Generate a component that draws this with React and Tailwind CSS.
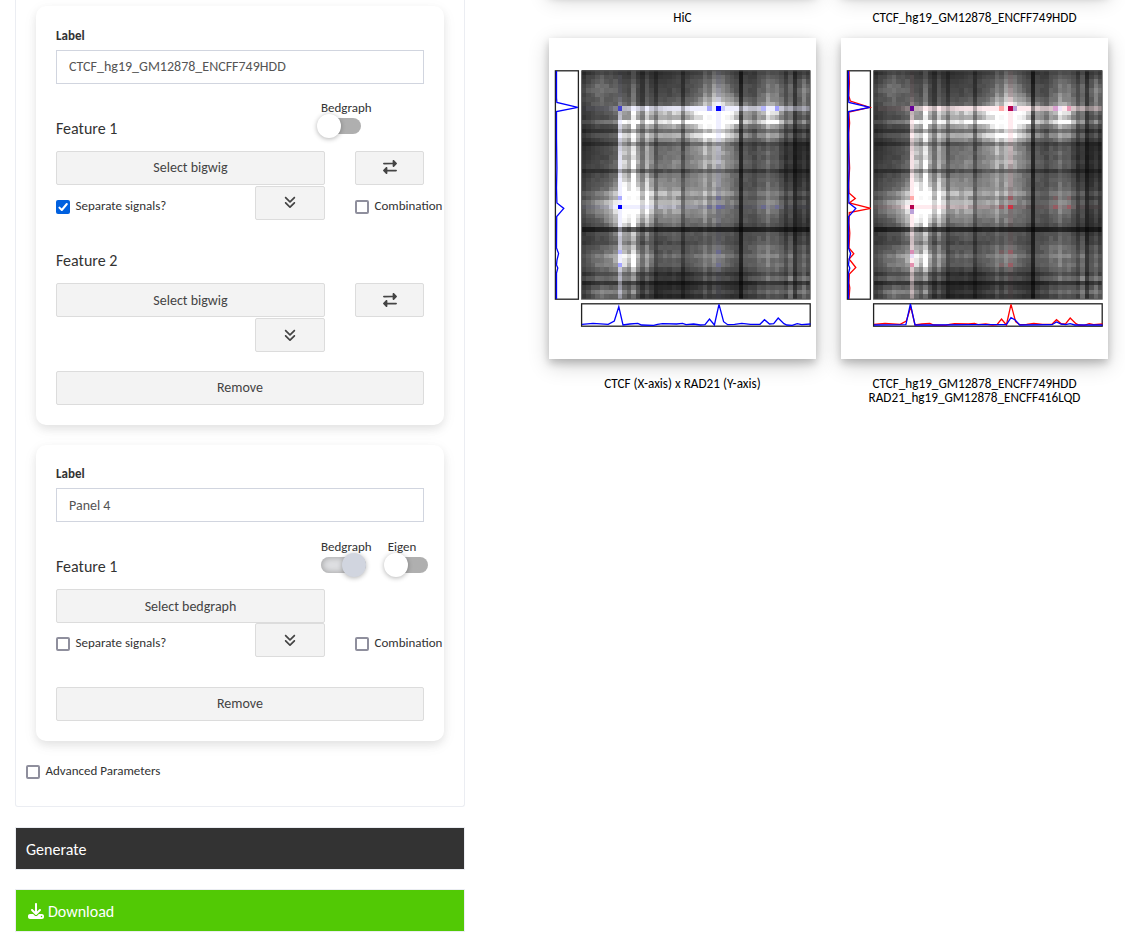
import React from "react";
import { FaAnglesDown, FaDownload, FaRightLeft } from "react-icons/fa6";

/* ---------- heat map data ---------- */

const SIZE = 51;
const NODES = [0, 4, 7, 8, 12, 17, 22, 27, 30, 33, 38, 42, 46, 50];
const BASE = [
  [55, 80, 70, 65, 60, 50, 60, 75, 100, 75, 65, 85, 70, 70],
  [80, 105, 85, 85, 70, 62, 65, 95, 135, 95, 70, 110, 90, 120],
  [70, 85, 85, 110, 85, 85, 90, 150, 220, 170, 90, 150, 90, 110],
  [65, 85, 110, 150, 215, 205, 200, 290, 370, 280, 160, 250, 130, 110],
  [60, 70, 85, 215, 200, 165, 165, 240, 310, 230, 110, 170, 95, 80],
  [50, 62, 85, 205, 165, 110, 110, 150, 170, 125, 75, 90, 50, 40],
  [60, 65, 90, 200, 165, 110, 110, 130, 145, 120, 75, 85, 45, 45],
  [75, 95, 150, 290, 240, 150, 130, 130, 130, 115, 80, 105, 70, 60],
  [100, 135, 220, 370, 310, 170, 145, 130, 115, 110, 90, 120, 75, 65],
  [75, 95, 170, 280, 230, 125, 120, 115, 110, 105, 85, 95, 65, 55],
  [65, 70, 90, 165, 110, 75, 75, 80, 90, 85, 90, 95, 80, 70],
  [85, 110, 150, 250, 170, 90, 85, 105, 120, 95, 95, 110, 95, 90],
  [70, 90, 90, 140, 95, 50, 45, 70, 75, 65, 80, 95, 110, 105],
  [70, 120, 110, 130, 80, 40, 45, 60, 65, 55, 70, 90, 105, 110],
];
const BIN = [
  0.85, 0.95, 1, 1.05, 1.05, 1, 1, 1.05, 1.05, 0.92, 0.85, 1.3, 0.9, 0.68, 1.12, 0.92,
  0.66, 0.95, 1, 0.97, 1.1, 1.05, 0.68, 0.95, 1, 1, 1, 1.2, 0.94, 1.13, 1.05, 1,
  0.95, 0.95, 0.85, 0.34, 0.88, 0.9, 0.92, 1.05, 1, 1.18, 0.97, 1.05, 0.92, 0.72, 1.08,
  0.52, 0.85, 1.1, 0.82,
];

function locate(i) {
  let k = 0;
  while (k < NODES.length - 2 && i >= NODES[k + 1]) k++;
  return [k, (i - NODES[k]) / (NODES[k + 1] - NODES[k])];
}

function noise(a, b) {
  const s = Math.sin(Math.min(a, b) * 12.9898 + Math.max(a, b) * 78.233) * 43758.5453;
  return s - Math.floor(s);
}

function level(r, c) {
  const [i, u] = locate(r);
  const [j, v] = locate(c);
  const top = BASE[i][j] * (1 - v) + BASE[i][j + 1] * v;
  const bottom = BASE[i + 1][j] * (1 - v) + BASE[i + 1][j + 1] * v;
  const smooth = top * (1 - u) + bottom * u;
  const g = 1.06 * smooth * BIN[r] * BIN[c] * (0.93 + 0.16 * noise(r, c));
  return Math.round(Math.max(4, Math.min(255, g)));
}

const GRID = Array.from({ length: SIZE }, (_, r) =>
  Array.from({ length: SIZE }, (_, c) => level(r, c))
);

/* [row, column, colour, opacity] */
const BLUE_CELLS = [
  [8, 8, "#4444cc", 1], [8, 28, "#a9a9ff", 1], [8, 30, "#0000ff", 1], [8, 31, "#ccccff", 1],
  [8, 40, "#b4b4fa", 1], [8, 43, "#a0a0ff", 1], [28, 8, "#aaaaff", 1], [30, 8, "#0000ff", 1],
  [40, 8, "#b5b5fa", 1], [43, 8, "#a5a5ff", 1], [30, 30, "#5555cc", 0.5], [30, 31, "#5555cc", 0.25],
  [30, 28, "#5555cc", 0.2], [30, 40, "#5555cc", 0.25], [30, 43, "#5555cc", 0.25],
  [28, 30, "#5555cc", 0.25], [40, 30, "#5555cc", 0.25], [43, 30, "#5555cc", 0.2],
];
const RED_CELLS = [
  [8, 8, "#660099", 1], [8, 28, "#ffaaaa", 1], [8, 30, "#b5004d", 1], [8, 31, "#bba0d8", 1],
  [8, 40, "#d9a0d0", 1], [8, 41, "#f0e4fa", 1], [8, 43, "#e89ab8", 1], [28, 8, "#ffaaaa", 1],
  [30, 8, "#b5004d", 1], [31, 8, "#bba0d8", 1], [40, 8, "#d98cb5", 1], [43, 8, "#e38fae", 1],
  [41, 8, "#e8dcf6", 1], [30, 30, "#cc3344", 1], [28, 30, "#cc3344", 0.35], [30, 28, "#cc3344", 0.35],
  [30, 40, "#cc3344", 0.35], [30, 43, "#cc3344", 0.35], [40, 30, "#cc3344", 0.3], [43, 30, "#cc3344", 0.35],
  [40, 28, "#cc3344", 0.15], [43, 28, "#cc3344", 0.15], [28, 40, "#cc3344", 0.15], [28, 43, "#cc3344", 0.15],
];

const OX = 33;
const OY = 32.3;
const CELL = 4.48;

function HeatMap({ cells, tint }) {
  const full = SIZE * CELL;
  return (
    <g shapeRendering="crispEdges">
      {GRID.map((row, r) =>
        row.map((g, c) => (
          <rect
            key={r * SIZE + c}
            x={OX + c * CELL}
            y={OY + r * CELL}
            width={CELL}
            height={CELL}
            fill={`rgb(${g},${g},${g})`}
          />
        ))
      )}
      <g fill={tint} className="mix-blend-multiply">
        <rect x={OX + 8 * CELL} y={OY} width={CELL} height={full} />
        <rect x={OX} y={OY + 8 * CELL} width={full} height={CELL} />
        <rect x={OX + 30 * CELL} y={OY} width={CELL} height={full} />
        <rect x={OX} y={OY + 30 * CELL} width={full} height={CELL} />
      </g>
      <g fill={tint} opacity="0.3">
        <rect x={OX + 8 * CELL} y={OY + 9 * CELL} width={CELL} height={full - 9 * CELL} />
        <rect x={OX + 9 * CELL} y={OY + 8 * CELL} width={full - 9 * CELL} height={CELL} />
      </g>
      {cells.map(([r, c, fill, opacity]) => (
        <rect
          key={`${r}-${c}`}
          x={OX + c * CELL}
          y={OY + r * CELL}
          width={CELL}
          height={CELL}
          fill={fill}
          opacity={opacity}
        />
      ))}
    </g>
  );
}

function Frame() {
  return (
    <g fill="none" stroke="#222" strokeWidth="1.3">
      <rect x="6.4" y="32.8" width="23" height="228.4" />
      <rect x="32.6" y="32.8" width="228.6" height="228.4" strokeWidth="1" stroke="#555" />
      <rect x="32.6" y="265.8" width="228.6" height="22.4" />
    </g>
  );
}

const pts = (xs) =>
  xs.map(([x, y]) => `${((x - 136) / 2.635 + 33).toFixed(1)},${(y / 3 - 38).toFixed(1)}`).join(" ");

/* Signals along the horizontal axis */
const H_SIGNAL = pts([
  [136, 973], [165, 970], [205, 973], [221, 963], [233, 920], [244, 975], [262, 972], [283, 970], [293, 975],
  [325, 976], [335, 973], [348, 971], [385, 972], [401, 970], [410, 974], [430, 972], [448, 975], [460, 974],
  [472, 957], [485, 975], [497, 913], [509, 965], [520, 974], [538, 973], [557, 970], [580, 973], [605, 973],
  [617, 959], [630, 972], [641, 971], [653, 954], [668, 971], [676, 975], [690, 976], [703, 971], [715, 974],
  [738, 972],
]);
const H_SECOND = pts([
  [136, 975], [220, 974], [232, 912], [244, 975], [300, 975], [400, 974], [485, 974], [497, 953], [508, 960],
  [520, 975], [605, 974], [617, 966], [629, 972], [641, 974], [653, 971], [665, 975], [738, 975],
]);

/* Signals along the vertical axis */
const V_SIGNAL =
  "7.5,33 7.5,60 7.9,64.5 28.8,69.3 7.5,73.6 7.5,100 7.9,130 7.5,150 7.9,165 14.8,170.4 7.7,178.5 7.5,210 9.6,215.5 8,222 7.5,227 8.8,230 7.5,235 7.5,261";
const V_RED =
  "8,33 8.4,45 7.8,58 9.3,63 28.8,69.3 7.8,74 8.6,85 7.8,95 8,115 8.6,130 7.8,145 8,155 14.3,160.5 8.3,165 29.8,170.4 8.3,174.5 8,185 8.8,195 8,210 12.8,215.8 8.1,221 14.8,229.5 8.4,236 8,245 8.8,250 8,261";

function Plot({ combined }) {
  return (
    <svg width="267" height="321" viewBox="0 0 267 321" className="isolate block">
      <HeatMap cells={combined ? RED_CELLS : BLUE_CELLS} tint={combined ? "#ffebef" : "#efefff"} />
      <Frame />
      <g fill="none" strokeWidth="1.3">
        {combined && <polyline points={V_RED} stroke="#f00" />}
        <polyline points={V_SIGNAL} stroke="#00f" />
        <polyline points={H_SIGNAL} stroke={combined ? "#f00" : "#00f"} />
        {combined && <polyline points={H_SECOND} stroke="#00f" />}
      </g>
    </svg>
  );
}

/* ---------- form controls ---------- */

function Button({ children, className = "" }) {
  return (
    <button
      className={`flex h-[34px] shrink-0 items-center justify-center rounded-[2px] border border-[#dcdcdc] bg-[#f3f3f3] text-[14px] text-[#444] ${className}`}
    >
      {children}
    </button>
  );
}

function Check({ label, checked }) {
  return (
    <label className="flex h-[14px] items-center gap-[5.5px] whitespace-nowrap text-[13px] text-[#333]">
      {checked ? (
        <span className="flex size-[14px] shrink-0 items-center justify-center rounded-[2px] bg-[#0060df]">
          <svg width="14" height="14" viewBox="0 0 14 14" fill="none" stroke="#fff" strokeWidth="2" strokeLinecap="round" strokeLinejoin="round">
            <path d="M3.4 7.6 L5.8 10 L10.8 4" />
          </svg>
        </span>
      ) : (
        <span className="size-[14px] shrink-0 rounded-[2px] border-2 border-[#8f8f9d] bg-white" />
      )}
      <span className="pb-0.5">{label}</span>
    </label>
  );
}

function Toggle({ label, on }) {
  return (
    <div className="flex shrink-0 flex-col">
      <span className="text-[13px] leading-[13px] text-[#333]">{label}</span>
      <div className="flex h-6 items-center">
        {on ? (
          <div className="flex h-4 w-[45px] items-center justify-end rounded-full bg-[#dfe0e3] shadow-[inset_0_0_7px_#999]">
            <span className="size-6 shrink-0 rounded-full bg-[#d1d5df] shadow-[0_1px_5px_rgba(0,0,0,0.3)]" />
          </div>
        ) : (
          <div className="-ml-[4px] flex h-4 w-[44px] items-center rounded-full bg-gradient-to-r from-transparent from-30% to-[#afafaf] to-30%">
            <span className="size-6 shrink-0 rounded-full bg-white shadow-[0_1px_5px_rgba(0,0,0,0.3)]" />
          </div>
        )}
      </div>
    </div>
  );
}

function Field({ value, className = "" }) {
  return (
    <>
      <div className="h-[24px] text-[13px] leading-[20px] font-bold text-[#333]">Label</div>
      <input
        readOnly
        value={value}
        className={`block h-[34px] w-full border border-[#d1d5df] bg-white px-3 text-[14px] text-[#555] outline-none ${className}`}
      />
    </>
  );
}

function Card({ children, className = "" }) {
  return (
    <section
      className={`w-[408px] rounded-[10px] bg-white px-5 shadow-[0_4px_8px_rgba(0,0,0,0.08),0_4px_16px_rgba(0,0,0,0.05)] ${className}`}
    >
      {children}
    </section>
  );
}

function PlotCard({ combined }) {
  return (
    <div className="h-[321px] w-[267px] bg-white shadow-[0_4px_8px_rgba(0,0,0,0.2),0_6px_20px_rgba(0,0,0,0.19)]">
      <Plot combined={combined} />
    </div>
  );
}

function Caption({ children }) {
  return (
    <div className="mt-[18px] text-center text-[13.2px] leading-[14px] whitespace-pre text-black">{children}</div>
  );
}

export default function App() {
  return (
    <div className="flex h-[947px] w-full overflow-hidden bg-white font-[Carlito,Calibri,Lato,sans-serif]">
      <aside className="ml-[15px] w-[450px] shrink-0">
        <div className="h-[807px] rounded-b-[3px] border border-t-0 border-[#ebedf2] pt-1.5 pl-5">
          <Card className="h-[419px] pt-5">
            <Field value="CTCF_hg19_GM12878_ENCFF749HDD" className="pb-0.5" />
            <div className="mt-[17px] flex h-[50px] items-start">
              <h3 className="mt-[18px] w-[265px] shrink-0 text-[16px] leading-[20px] text-[#333]">Feature 1</h3>
              <Toggle label="Bedgraph" />
            </div>
            <div className="flex justify-between">
              <Button className="w-[269px] pb-0.5">Select bigwig</Button>
              <Button className="w-[69px] pb-0.5"><FaRightLeft /></Button>
            </div>
            <div className="mt-px flex h-[65px] items-start">
              <div className="mt-[14px] w-[199px] shrink-0"><Check label="Separate signals?" checked /></div>
              <Button className="w-[70px] pb-0.5"><FaAnglesDown /></Button>
              <div className="mt-[14px] ml-[30px] w-0"><Check label="Combination" /></div>
            </div>
            <h3 className="h-[32px] text-[16px] leading-[20px] text-[#333]">Feature 2</h3>
            <div className="flex justify-between">
              <Button className="w-[269px]">Select bigwig</Button>
              <Button className="w-[69px]"><FaRightLeft /></Button>
            </div>
            <Button className="mt-px ml-[199px] w-[70px]"><FaAnglesDown /></Button>
            <Button className="mt-[19px] w-full pb-0.5">Remove</Button>
          </Card>

          <Card className="mt-5 h-[296px] pt-[19px]">
            <Field value="Panel 4" />
            <div className="mt-[18px] flex h-[49px] items-start">
              <h3 className="mt-[17px] w-[265px] shrink-0 text-[16px] leading-[20px] text-[#333]">Feature 1</h3>
              <Toggle label="Bedgraph" on />
              <div className="ml-4"><Toggle label="Eigen" /></div>
            </div>
            <Button className="w-[269px]">Select bedgraph</Button>
            <div className="flex h-[64px] items-start">
              <div className="mt-[14px] w-[199px] shrink-0"><Check label="Separate signals?" /></div>
              <Button className="w-[70px]"><FaAnglesDown /></Button>
              <div className="mt-[14px] ml-[30px] w-0"><Check label="Combination" /></div>
            </div>
            <Button className="w-full pb-0.5">Remove</Button>
          </Card>

          <div className="mt-[24px] -ml-2.5"><Check label="Advanced Parameters" /></div>
        </div>

        <button className="mt-5 flex h-[43px] w-[450px] items-center border border-[#ebedf2] bg-[#333] px-2.5 pt-[3px] text-[16px] text-white">
          Generate
        </button>
        <button className="mt-[19px] flex h-[43px] w-[450px] items-center gap-1 border border-[#ebedf2] bg-[#52c905] px-3 text-[16px] text-white">
          <FaDownload />
          <span className="pt-[3px]">Download</span>
        </button>
      </aside>

      <main className="-mt-[328px] ml-[84px] grid h-fit grid-cols-[267px_267px] gap-x-[25px]">
        <div className="h-[366px]">
          <PlotCard />
          <Caption>HiC</Caption>
        </div>
        <div className="h-[366px]">
          <PlotCard combined />
          <Caption>CTCF_hg19_GM12878_ENCFF749HDD</Caption>
        </div>
        <div>
          <PlotCard />
          <Caption>CTCF (X-axis) x RAD21 (Y-axis)</Caption>
        </div>
        <div>
          <PlotCard combined />
          <Caption>{"CTCF_hg19_GM12878_ENCFF749HDD\nRAD21_hg19_GM12878_ENCFF416LQD"}</Caption>
        </div>
      </main>
    </div>
  );
}
